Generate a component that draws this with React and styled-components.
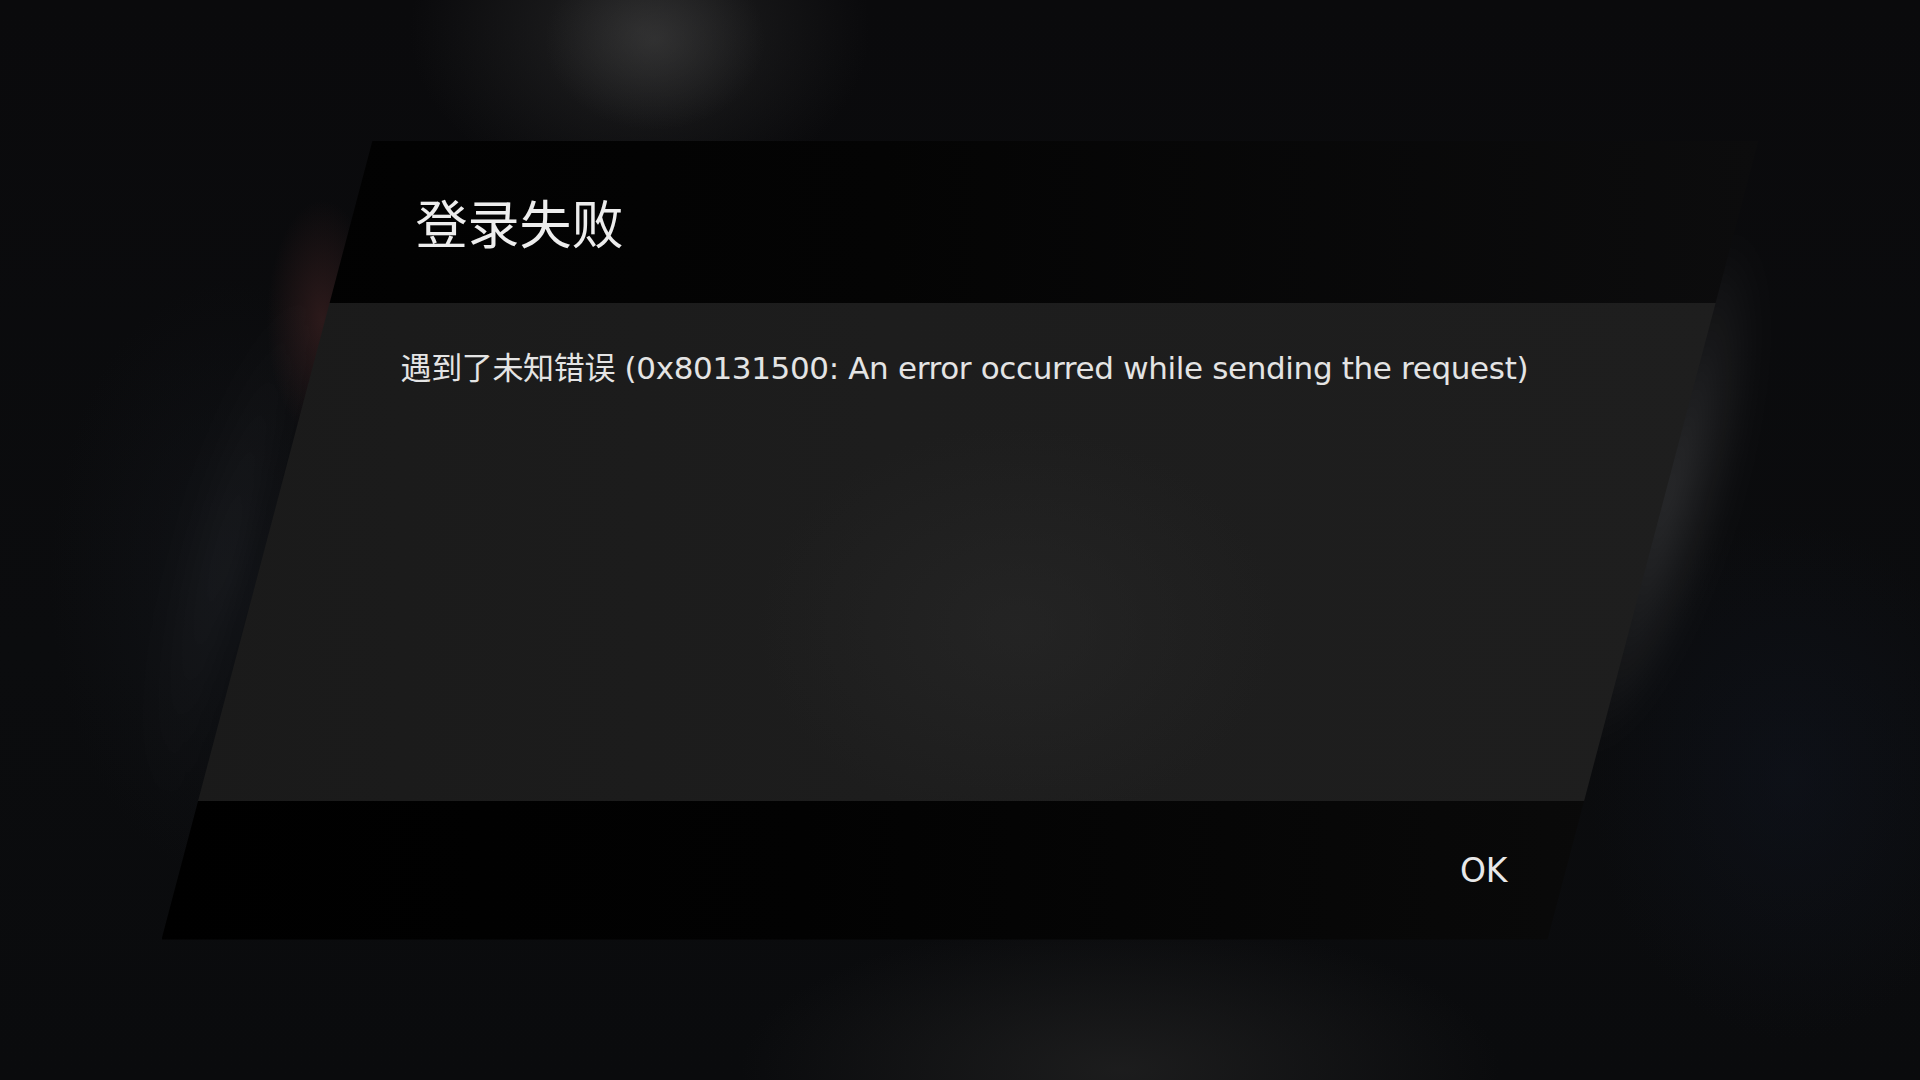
import React from 'react';
import styled, { createGlobalStyle } from 'styled-components';

const SKEW = 211; // horizontal shift of the slanted edges over the full dialog height

const App = () => {
  return (
    <>
      <GlobalStyle />
      <StyleScreen>
        <StyleFrame>
          <StyleEdgeGlow $side='right' />
          <StyleEdgeGlow $side='left' />
          <StylePanel role='alertdialog' aria-labelledby='dlg-title'>
            <StyleHeader>
              <StyleTitle id='dlg-title'>登录失败</StyleTitle>
            </StyleHeader>
            <StyleBody>
              <StyleMessage>遇到了未知错误 (0x80131500: An error occurred while sending the request)</StyleMessage>
            </StyleBody>
            <StyleFooter>
              <StyleOkButton type='button'>OK</StyleOkButton>
            </StyleFooter>
          </StylePanel>
        </StyleFrame>
      </StyleScreen>
    </>
  );
};

export default App;

const GlobalStyle = createGlobalStyle`
  * {
    box-sizing: border-box;
  }
  html, body {
    margin: 0;
    padding: 0;
    background: #0a0b0d;
    overflow: hidden;
  }
`;

const StyleScreen = styled.div`
  width: 1920px;
  height: 1080px;
  display: flex;
  align-items: center;
  justify-content: center;
  background:
    radial-gradient(ellipse 110px 90px at 655px 40px, rgba(70, 70, 70, 0.45), transparent),
    radial-gradient(ellipse 230px 170px at 640px 30px, rgba(52, 52, 52, 0.55), transparent),
    radial-gradient(ellipse 55px 120px at 322px 320px, rgba(72, 38, 38, 0.55), transparent),
    radial-gradient(ellipse 380px 150px at 1120px 1070px, rgba(36, 36, 36, 0.7), transparent),
    radial-gradient(ellipse 200px 260px at 1790px 780px, rgba(18, 24, 38, 0.4), transparent),
    radial-gradient(ellipse 180px 300px at 230px 580px, rgba(22, 25, 31, 0.45), transparent),
    linear-gradient(180deg, #0a0a0c 0%, #0b0c0e 60%, #0a0b0d 100%);
`;

const StyleFrame = styled.div`
  position: relative;
  width: 1597px;
  height: 799px;
`;

const StyleEdgeGlow = styled.div`
  position: absolute;
  top: 100px;
  bottom: 140px;
  width: 120px;
  left: ${({ $side }) => ($side === 'right' ? '1478px' : '-30px')};
  transform: skewX(-14.8deg);
  transform-origin: center;
  filter: blur(14px);
  background: ${({ $side }) =>
    $side === 'right'
      ? 'radial-gradient(ellipse 75% 55% at 8% 45%, rgba(255, 255, 255, 0.14), transparent 85%)'
      : 'radial-gradient(ellipse 70% 60% at 95% 55%, rgba(255, 255, 255, 0.035), transparent 80%)'};
`;

const StylePanel = styled.div`
  position: relative;
  width: 100%;
  height: 100%;
  display: flex;
  flex-direction: column;
  clip-path: polygon(${SKEW}px 0, 100% 0, calc(100% - ${SKEW}px) 100%, 0 100%);
  color: #e8e8e8;
`;

const StyleHeader = styled.header`
  height: 162px;
  display: flex;
  align-items: center;
  padding-left: 254px;
  background: linear-gradient(90deg, #010101 0%, #040404 45%, #0c0c0d 100%);
`;

const StyleTitle = styled.h1`
  margin: 0;
  font-family: 'Noto Sans CJK SC', 'Noto Sans', sans-serif;
  font-weight: 400;
  font-size: 52px;
  line-height: 1;
  color: #ededed;
`;

const StyleBody = styled.main`
  flex: 1;
  padding: 45px 0 0 239px;
  background:
    radial-gradient(ellipse 260px 200px at 855px 323px, rgba(40, 40, 40, 0.6), transparent),
    linear-gradient(90deg, #1a1a1a 0%, #1d1d1d 45%, #1e1e1e 100%);
`;

const StyleMessage = styled.p`
  margin: 0;
  font-family: 'DejaVu Sans', 'Noto Sans CJK SC', sans-serif;
  font-size: 31px;
  line-height: 40px;
  letter-spacing: -0.35px;
  color: #e4e4e4;
  white-space: nowrap;
`;

const StyleFooter = styled.footer`
  height: 139px;
  display: flex;
  align-items: center;
  justify-content: flex-end;
  padding-right: 251px;
  background: linear-gradient(90deg, #000000 0%, #020202 40%, #0b0b0b 100%);
`;

const StyleOkButton = styled.button`
  background: none;
  border: 0;
  padding: 0;
  font-family: 'DejaVu Sans', sans-serif;
  font-size: 33px;
  line-height: 1;
  color: #e8e8e8;
  cursor: pointer;
`;
